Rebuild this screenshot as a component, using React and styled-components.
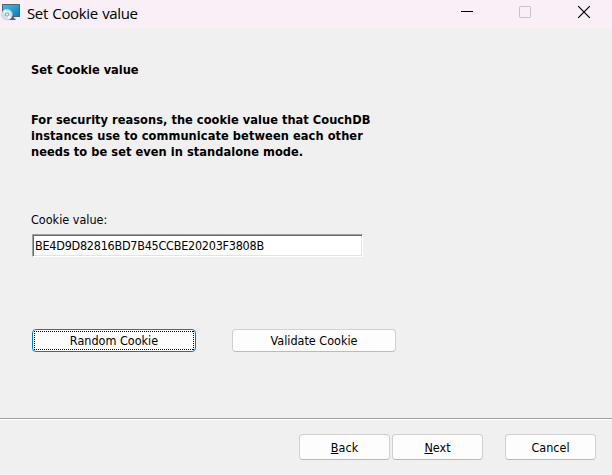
import React from "react";
import styled, { createGlobalStyle, css } from "styled-components";

const GlobalStyle = createGlobalStyle`
  *, *::before, *::after { box-sizing: border-box; }
  body { margin: 0; background: #f0f0f0; }
`;

const Dialog = styled.div`
  display: flex;
  flex-direction: column;
  width: 612px;
  height: 475px;
  overflow: hidden;
  background: #f0f0f0;
  color: #000;
  font: 12.5px/16px "DejaVu Sans Condensed", "DejaVu Sans", sans-serif;
  font-stretch: condensed;
`;

const TitleBar = styled.header`
  display: flex;
  align-items: flex-start;
  flex: none;
  height: 28px;
  background: #f9eff6;
`;

const AppIcon = styled.svg`
  flex: none;
  width: 22px;
  height: 22px;
`;

const Title = styled.div`
  flex: 1;
  padding-left: 5px;
  font: 15px/26px "Open Sans", "Noto Sans", sans-serif;
  letter-spacing: -0.38px;
  word-spacing: 1px;
  white-space: nowrap;
`;

const WindowControls = styled.svg`
  flex: none;
  width: 172px;
  height: 28px;
`;

const Content = styled.main`
  display: flex;
  flex-direction: column;
  flex: none;
  height: 390px;
  padding: 34px 31px 0;
`;

const Heading = styled.h1`
  margin: 0 0 34px;
  font-size: 12.7px;
  font-weight: bold;
  line-height: 16px;
  white-space: nowrap;
`;

const Description = styled.p`
  margin: 0 0 52px;
  font-size: 12.7px;
  font-weight: bold;
  white-space: nowrap;
`;

const Line = styled.span`
  display: block;
  letter-spacing: ${(p) => p.$spacing || 0}px;
`;

const Label = styled.label`
  margin-bottom: 6px;
  white-space: nowrap;
`;

const CookieInput = styled.input`
  width: 331px;
  height: 23px;
  margin: 0 0 72px 1px;
  padding: 0 0 0 2px;
  border: 1px solid;
  border-color: #a0a0a0 #fff #fff #a0a0a0;
  border-radius: 0;
  outline: 0;
  background: #fff;
  box-shadow: inset 1px 1px #696969, inset -1px -1px #e3e3e3;
  color: #000;
  font: inherit;
  letter-spacing: -0.25px;
`;

const ActionRow = styled.div`
  display: flex;
  gap: 36px;
  padding-left: 1px;
`;

const Button = styled.button`
  display: flex;
  align-items: center;
  justify-content: center;
  width: 164px;
  height: 23px;
  margin: 0;
  padding: 0;
  border: 1px solid #d0d0d0;
  border-bottom-color: #bababa;
  border-radius: 4px;
  background: #fdfdfd;
  color: #000;
  font: inherit;
  white-space: nowrap;
  ${(p) =>
    p.$focused &&
    css`
      border-color: #0078d4;
      padding: 1px;
    `}
`;

const NavButton = styled(Button)`
  width: 91px;
  height: 26px;
  padding-top: 2px;
`;

const FocusRing = styled.span`
  display: flex;
  align-items: center;
  justify-content: center;
  width: 100%;
  height: 100%;
  background:
    repeating-linear-gradient(90deg, #000 0 1px, transparent 1px 2px) top / 100% 1px no-repeat,
    repeating-linear-gradient(90deg, #000 0 1px, transparent 1px 2px) bottom / 100% 1px no-repeat,
    repeating-linear-gradient(180deg, #000 0 1px, transparent 1px 2px) left / 1px 100% no-repeat,
    repeating-linear-gradient(180deg, #000 0 1px, transparent 1px 2px) right / 1px 100% no-repeat;
`;

const Footer = styled.footer`
  display: flex;
  justify-content: flex-end;
  flex: none;
  height: 57px;
  padding: 15px 16px 0 0;
  border-top: 1px solid #a0a0a0;
  box-shadow: inset 0 1px #fff;
`;

const StepButtons = styled.div`
  display: flex;
  gap: 2px;
  margin-right: 22px;
`;

const AccessKey = styled.span`
  text-decoration: underline;
  text-decoration-thickness: 1px;
  text-underline-offset: 1px;
  text-decoration-skip-ink: none;
`;

function InstallerIcon() {
  return (
    <AppIcon viewBox="0 0 22 22" aria-hidden="true">
      <defs>
        <linearGradient id="screen" x1="0" y1="0" x2="1" y2="1">
          <stop offset="0" stopColor="#35c5ea" />
          <stop offset="1" stopColor="#1479b5" />
        </linearGradient>
      </defs>
      <path d="M9 17h5v1.5h1.5v1.5H8z" fill="#5b666e" />
      <rect x="2" y="4" width="18" height="13" rx=".6" fill="#4d6470" />
      <rect x="3" y="5" width="16" height="11" fill="url(#screen)" />
      <circle cx="7" cy="14.5" r="5.3" fill="#d9e3ec" stroke="#b4c3ce" strokeWidth=".6" />
      <path d="M7 14.5 3.2 11A5.2 5.2 0 0 1 6 9.4zM7 14.5l4.4 2.8A5.2 5.2 0 0 1 9 19.4z" fill="#f8fcff" />
      <circle cx="7" cy="14.5" r="2.1" fill="#78abd0" />
      <circle cx="7" cy="14.5" r="1" fill="#fff" />
    </AppIcon>
  );
}

export default function App() {
  return (
    <>
      <GlobalStyle />
      <Dialog>
        <TitleBar>
          <InstallerIcon />
          <Title>Set Cookie value</Title>
          <WindowControls viewBox="0 0 172 28" fill="none">
            <path d="M21 11.5h12" stroke="#000" />
            <rect x="79.5" y="6.5" width="11" height="11" rx=".7" stroke="#cbc2c8" />
            <path d="m138.2 6.2 11.6 11.6m0-11.6-11.6 11.6" stroke="#000" strokeWidth="1.2" />
          </WindowControls>
        </TitleBar>
        <Content>
          <Heading>Set Cookie value</Heading>
          <Description>
            <Line $spacing={0.04}>For security reasons, the cookie value that CouchDB</Line>
            <Line $spacing={0.08}>instances use to communicate between each other</Line>
            <Line $spacing={0.05}>needs to be set even in standalone mode.</Line>
          </Description>
          <Label htmlFor="cookie">Cookie value:</Label>
          <CookieInput id="cookie" defaultValue="BE4D9D82816BD7B45CCBE20203F3808B" spellCheck={false} />
          <ActionRow>
            <Button $focused>
              <FocusRing>Random Cookie</FocusRing>
            </Button>
            <Button>Validate Cookie</Button>
          </ActionRow>
        </Content>
        <Footer>
          <StepButtons>
            <NavButton>
              <span><AccessKey>B</AccessKey>ack</span>
            </NavButton>
            <NavButton>
              <span><AccessKey>N</AccessKey>ext</span>
            </NavButton>
          </StepButtons>
          <NavButton>Cancel</NavButton>
        </Footer>
      </Dialog>
    </>
  );
}
